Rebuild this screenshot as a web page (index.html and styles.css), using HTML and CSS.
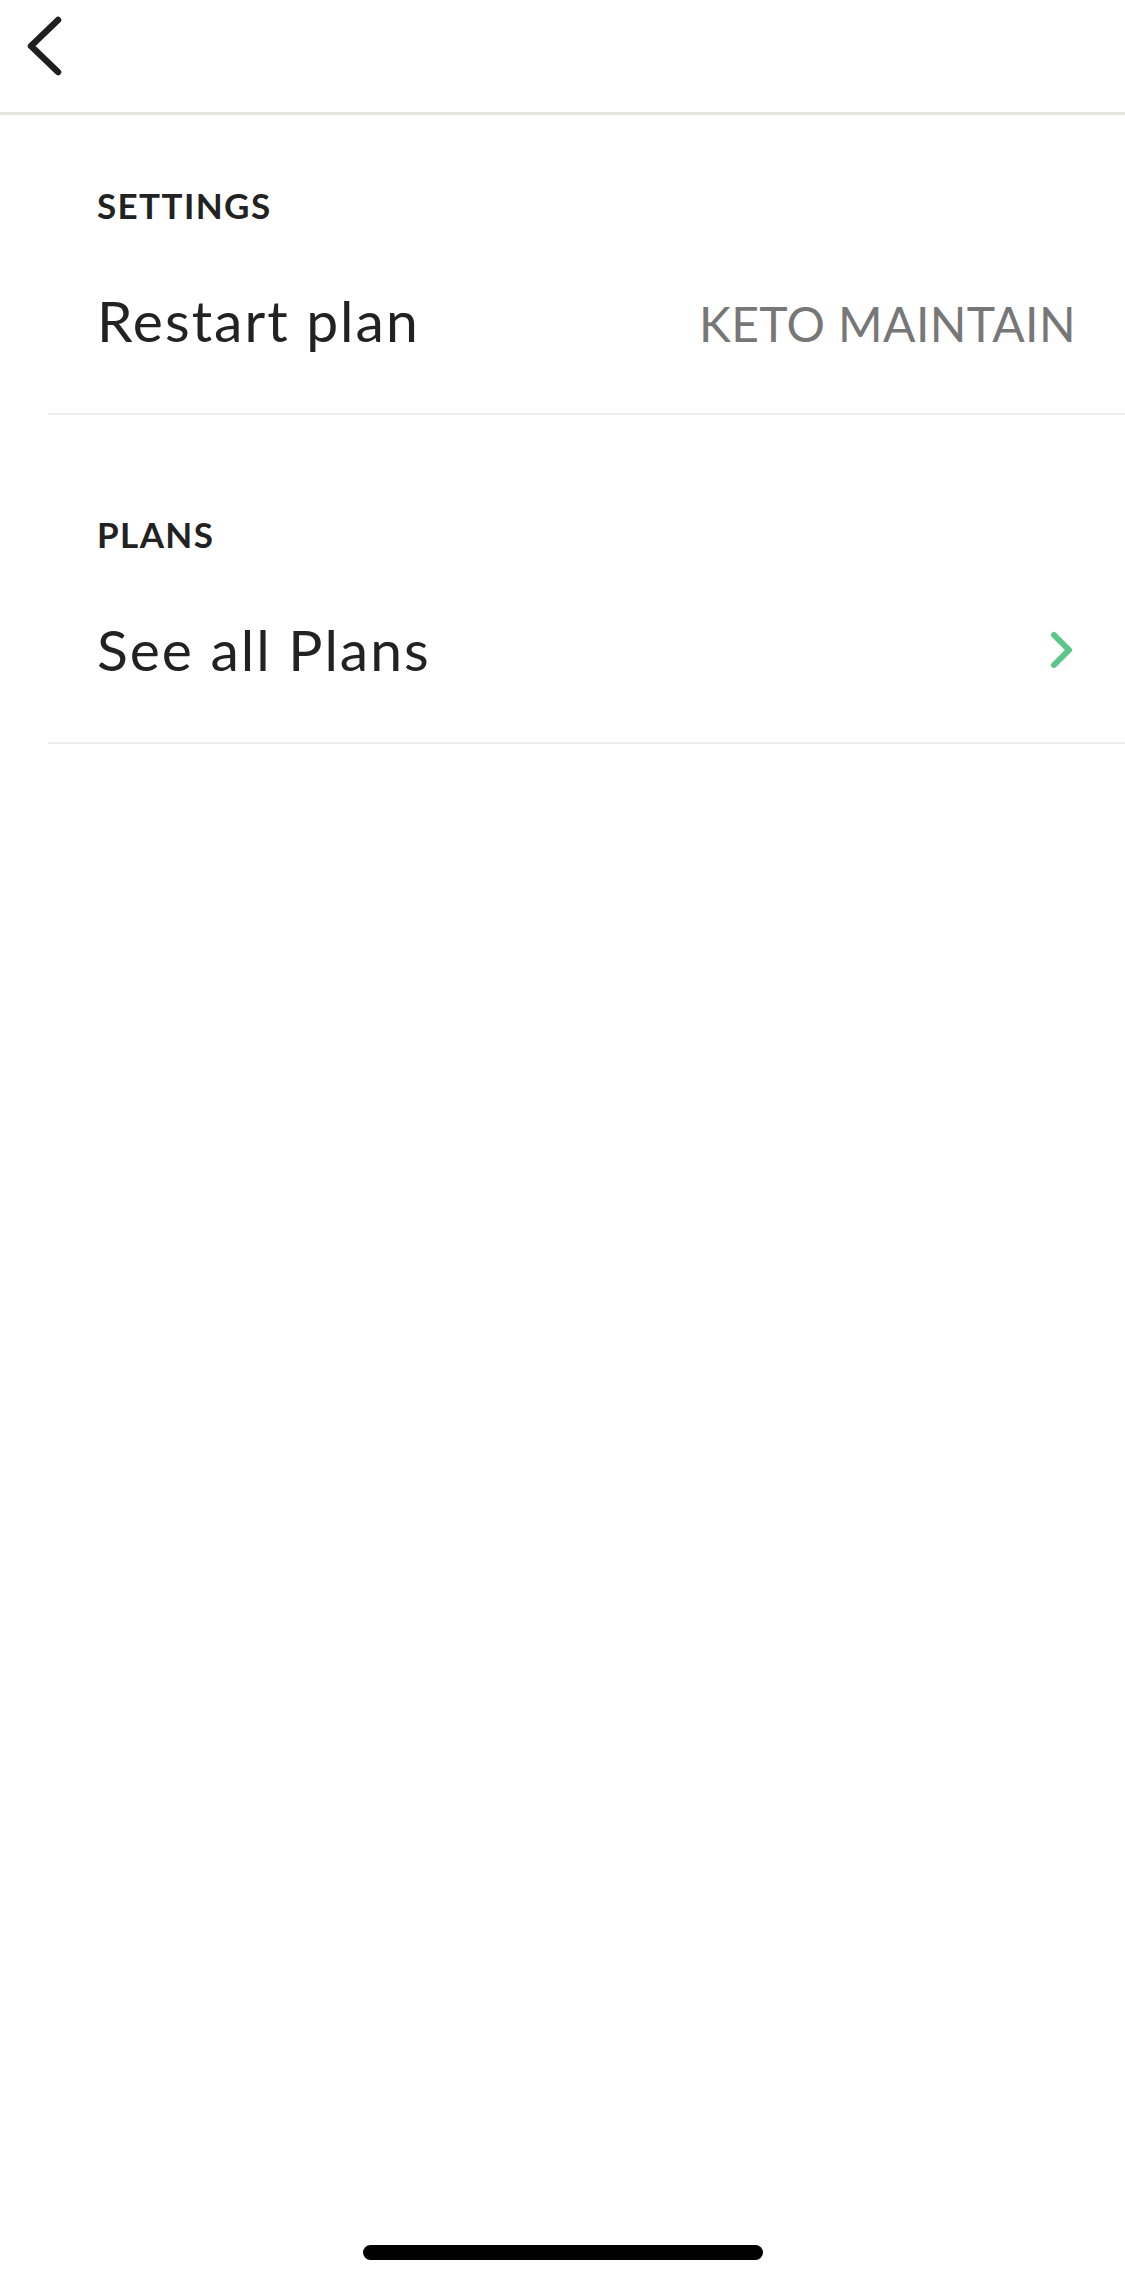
FILE: index.html
```html
<!DOCTYPE html>
<html>
<head>
<meta charset="utf-8">
<link rel="stylesheet" href="styles.css">
</head>
<body>
<div class="page">
  <header class="topbar">
    <svg class="back" width="40" height="64" viewBox="0 0 40 64">
      <polyline points="33,8 6,34 33,60" fill="none" stroke="#1f1f1f" stroke-width="6.5" stroke-linecap="round" stroke-linejoin="round"/>
    </svg>
  </header>
  <main class="list">
    <section class="section first">
      <div class="label">SETTINGS</div>
      <div class="row">
        <span class="row-text">Restart plan</span>
        <span class="row-value">KETO MAINTAIN</span>
      </div>
    </section>
    <section class="section">
      <div class="label">PLANS</div>
      <div class="row">
        <span class="row-text">See all Plans</span>
        <svg class="chev" width="26" height="40" viewBox="0 0 26 40">
          <polyline points="5,5 20,20 5,35" fill="none" stroke="#5cc68a" stroke-width="6" stroke-linecap="round" stroke-linejoin="round"/>
        </svg>
      </div>
    </section>
  </main>
  <footer class="home">
    <div class="home-bar"></div>
  </footer>
</div>
</body>
</html>
```
FILE: styles.css
```css
html, body {
  margin: 0;
  padding: 0;
  background: #ffffff;
}
body {
  font-family: Lato, "Open Sans", sans-serif;
  color: #222222;
}
.page {
  width: 1125px;
  height: 2284px;
  display: flex;
  flex-direction: column;
}
.topbar {
  height: 100px;
  border-bottom: 3px solid #e8e5dd;
  display: flex;
  align-items: flex-start;
  padding-left: 25px;
  padding-top: 12px;
}
.back {
  display: block;
}
.list {
  flex: 1;
  margin-left: 48px;
}
.section {
  border-bottom: 2px solid #eeeeee;
  padding: 102px 0 0 49px;
}
.section.first {
  padding-top: 73px;
}
.label {
  font-size: 35px;
  line-height: 35px;
  font-weight: 700;
  letter-spacing: 1.4px;
  color: #222222;
}
.row {
  display: flex;
  align-items: baseline;
  justify-content: space-between;
  padding-top: 69px;
  padding-bottom: 64px;
  padding-right: 49px;
}
.row-text {
  font-size: 57px;
  line-height: 57px;
  letter-spacing: 2px;
  color: #222222;
}
.row-value {
  font-size: 48px;
  line-height: 48px;
  color: #777777;
  letter-spacing: 0.4px;
}
.chev {
  align-self: center;
  margin-right: 1px;
}
.home {
  display: flex;
  justify-content: center;
  padding-bottom: 24px;
}
.home-bar {
  width: 400px;
  height: 15px;
  border-radius: 8px;
  background: #000000;
}
```
